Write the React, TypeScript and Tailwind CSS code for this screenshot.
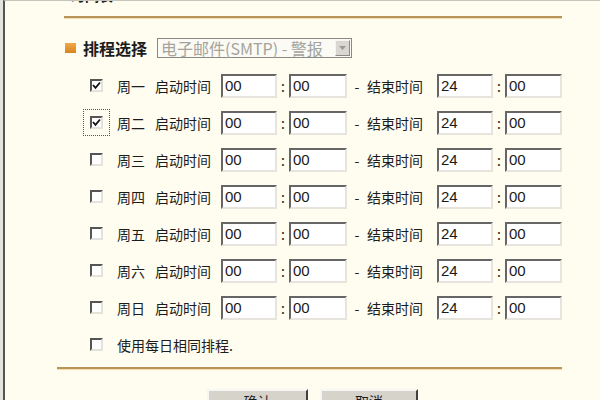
import React from "react";

// Schedule settings panel (router admin page, classic Windows form look)
const DAYS = [
  { label: "周一", checked: true },
  { label: "周二", checked: true, focused: true },
  { label: "周三", checked: false },
  { label: "周四", checked: false },
  { label: "周五", checked: false },
  { label: "周六", checked: false },
  { label: "周日", checked: false },
];

const cjk = "font-['Noto_Sans_CJK_SC','Liberation_Sans',sans-serif]";

function Box({ checked, focused }: { checked?: boolean; focused?: boolean }) {
  return (
    <span
      className={
        "flex h-[13px] w-[13px] shrink-0 items-center justify-center border-2 border-t-[#555] border-l-[#555] border-b-[#e4e2da] border-r-[#e4e2da] bg-white " +
        (focused ? "outline-1 outline-dotted outline-offset-[6px] outline-[#555]" : "")
      }
    >
      {checked && (
        <svg width="9" height="9" viewBox="0 0 9 9" aria-hidden>
          <path d="M1 4 L3.5 6.8 L8 1.5" fill="none" stroke="#111" strokeWidth="1.8" />
        </svg>
      )}
    </span>
  );
}

function Field({ value, w }: { value: string; w: string }) {
  return (
    <span
      className={
        "flex h-[24px] shrink-0 items-center border-2 border-t-[#666] border-l-[#666] border-b-[#e6e4dc] border-r-[#e6e4dc] bg-white pl-[2px] font-['Liberation_Sans',sans-serif] text-[15px] text-[#1a1a1a] " +
        w
      }
    >
      {value}
    </span>
  );
}

function Rule({ className }: { className: string }) {
  return <div className={"h-[3px] border-t-2 border-[#b8945a] bg-[#f3dcae] " + className} />;
}

export default function App() {
  return (
    <div className={"h-[400px] w-[600px] overflow-hidden bg-[#e4e4de] pl-[3px] text-[#1c1c1c] " + cjk}>
      <div className="h-full border-l-2 border-t border-l-[#555] border-t-[#c4c4bc] bg-[#fffdf0]">
        {/* heading cut off by the viewport */}
        <div className="h-[4px] overflow-hidden pl-[66px]">
          <div className="-mt-[14px] text-[14px] font-bold leading-[16px]">时间表</div>
        </div>

        <Rule className="ml-[59px] mt-[11px] w-[498px]" />

        {/* section header */}
        <div className="ml-[60px] mt-[19px] flex h-[20px] items-center">
          <span className="h-[10px] w-[11px] shrink-0 bg-gradient-to-b from-[#f0a848] to-[#d8841c]" />
          <span className="ml-[7px] w-[74px] text-[16px] font-bold leading-none">排程选择</span>
          <span className="flex h-[20px] w-[195px] items-center border border-[#8a8a84] bg-[#fbfaf4]">
            <span className="flex-1 whitespace-nowrap pl-[3px] text-[16px] leading-none text-[#a4a49c]">电子邮件(SMTP) - 警报</span>
            <span className="mr-[1px] flex h-[16px] w-[15px] shrink-0 items-center justify-center border border-t-[#f4f4f0] border-l-[#f4f4f0] border-b-[#8a8a84] border-r-[#8a8a84] bg-[#d8d6ce]">
              <svg width="7" height="4" viewBox="0 0 7 4" aria-hidden>
                <path d="M0 0 H7 L3.5 4 Z" fill="#9a9a94" />
              </svg>
            </span>
          </span>
        </div>

        {/* per-day rows */}
        <div className="mt-[9px] pl-[85px]">
          {DAYS.map((d) => (
            <div key={d.label} className="flex h-[37px] items-center text-[14px] leading-none">
              <Box checked={d.checked} focused={d.focused} />
              <span className="ml-[14px] w-[38px] shrink-0">{d.label}</span>
              <span className="w-[66px] shrink-0">启动时间</span>
              <Field value="00" w="w-[56px]" />
              <span className="w-[12px] shrink-0 text-center">:</span>
              <Field value="00" w="w-[58px]" />
              <span className="w-[20px] shrink-0 text-center">-</span>
              <span className="w-[70px] shrink-0">结束时间</span>
              <Field value="24" w="w-[56px]" />
              <span className="w-[12px] shrink-0 text-center">:</span>
              <Field value="00" w="w-[57px]" />
            </div>
          ))}
          <div className="flex h-[37px] items-center text-[14px] leading-none">
            <Box />
            <span className="ml-[14px]">使用每日相同排程.</span>
          </div>
        </div>

        <Rule className="ml-[52px] mt-[4px] w-[505px]" />

        {/* buttons */}
        <div className="ml-[202px] mt-[19px] flex gap-[12px]">
          <button className="h-[24px] w-[101px] border-2 border-t-[#f6f6f2] border-l-[#f6f6f2] border-b-[#404040] border-r-[#404040] bg-[#d6d3cb] text-[14px] leading-none">
            确认
          </button>
          <button className="h-[24px] w-[98px] border-2 border-t-[#f6f6f2] border-l-[#f6f6f2] border-b-[#404040] border-r-[#404040] bg-[#d6d3cb] text-[14px] leading-none">
            取消
          </button>
        </div>
      </div>
    </div>
  );
}
